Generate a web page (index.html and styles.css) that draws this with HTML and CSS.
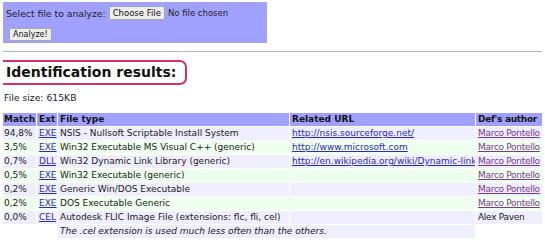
FILE: index.html
```html
<!DOCTYPE html>
<html>
<head>
    <title>File Identifier</title>
    <link rel="stylesheet" href="styles.css">
</head>
<body>
    <form class="upload-box">
        <div class="upload-row">
            <label for="file_input">Select file to analyze:</label>
            <input type="file" id="file_input" name="file_input">
        </div>
        <button type="button" class="analyze-btn">Analyze!</button>
    </form>

    <hr class="divider">

    <h2 class="results-title">Identification results:</h2>
    <p class="file-size">File size: 615KB</p>

    <table class="results">
        <colgroup>
            <col class="col-match">
            <col class="col-ext">
            <col class="col-type">
            <col class="col-url">
            <col class="col-author">
        </colgroup>
        <tr class="head">
            <th>Match</th>
            <th>Ext</th>
            <th>File type</th>
            <th>Related URL</th>
            <th class="author">Def's author</th>
        </tr>
        <tr class="odd">
            <td>94,8%</td>
            <td><a href="#">EXE</a></td>
            <td>NSIS - Nullsoft Scriptable Install System</td>
            <td><a href="#">http://nsis.sourceforge.net/</a></td>
            <td class="author"><a class="visited" href="#">Marco Pontello</a></td>
        </tr>
        <tr class="even">
            <td>3,5%</td>
            <td><a href="#">EXE</a></td>
            <td>Win32 Executable MS Visual C++ (generic)</td>
            <td><a href="#">http://www.microsoft.com</a></td>
            <td class="author"><a class="visited" href="#">Marco Pontello</a></td>
        </tr>
        <tr class="odd">
            <td>0,7%</td>
            <td><a href="#">DLL</a></td>
            <td>Win32 Dynamic Link Library (generic)</td>
            <td class="clip"><a href="#">http://en.wikipedia.org/wiki/Dynamic-link_library</a></td>
            <td class="author"><a class="visited" href="#">Marco Pontello</a></td>
        </tr>
        <tr class="even">
            <td>0,5%</td>
            <td><a href="#">EXE</a></td>
            <td>Win32 Executable (generic)</td>
            <td></td>
            <td class="author"><a class="visited" href="#">Marco Pontello</a></td>
        </tr>
        <tr class="odd">
            <td>0,2%</td>
            <td><a href="#">EXE</a></td>
            <td>Generic Win/DOS Executable</td>
            <td></td>
            <td class="author"><a class="visited" href="#">Marco Pontello</a></td>
        </tr>
        <tr class="even">
            <td>0,2%</td>
            <td><a href="#">EXE</a></td>
            <td>DOS Executable Generic</td>
            <td></td>
            <td class="author"><a class="visited" href="#">Marco Pontello</a></td>
        </tr>
        <tr class="odd">
            <td>0,0%</td>
            <td><a href="#">CEL</a></td>
            <td>Autodesk FLIC Image File (extensions: flc, fli, cel)</td>
            <td></td>
            <td class="author">Alex Paven</td>
        </tr>
        <tr class="note">
            <td class="blank"></td>
            <td class="blank"></td>
            <td colspan="2"><em>The .cel extension is used much less often than the others.</em></td>
            <td class="blank"></td>
        </tr>
    </table>
</body>
</html>
```

FILE: styles.css
```css
html, body {
    overflow: hidden;
}

body {
    margin: 2px 3px;
    font-family: "DejaVu Sans", Verdana, sans-serif;
    font-size: 9.25px;
    color: #222;
    background-color: #fff;
}

.upload-box {
    background-color: #a0a0ff;
    width: 258px;
    height: 34px;
    padding: 3px 3px 4px 3px;
    box-sizing: content-box;
    white-space: nowrap;
}

.upload-row {
    display: flex;
    align-items: center;
    gap: 3px;
    height: 16px;
}

.upload-row label {
    flex: none;
}

input[type="file"] {
    flex: none;
    font-family: "DejaVu Sans", Verdana, sans-serif;
    font-size: 8.5px;
    color: #222;
}

input[type="file"]::file-selector-button,
.analyze-btn {
    font-family: "DejaVu Sans", Verdana, sans-serif;
    font-size: 8.5px;
    color: #111;
    background-color: #ededed;
    border: 1px solid #a8a8a8;
    border-radius: 2px;
    padding: 1px 3px;
    margin-right: 3px;
}

.analyze-btn {
    margin: 7px 0 0 3px;
    font-size: 8px;
    padding: 1px 3px;
}

.divider {
    border: none;
    border-top: 1px solid #b4b4b4;
    margin: 8px -3px 0 -3px;
}

.results-title {
    display: inline-block;
    font-size: 14px;
    font-weight: bold;
    color: #111;
    margin: 8px 0 0 -6px;
    padding: 2px 9px 3px 7px;
    border: 2px solid #d2306e;
    border-radius: 7px;
}

.file-size {
    margin: 7px 0 9px 1px;
}

.results {
    border-spacing: 1px;
    table-layout: fixed;
    width: 596px;
    margin-left: -2px;
    white-space: nowrap;
    font-size: 9px;
}

.col-match { width: 34px; }
.col-ext { width: 20px; }
.col-type { width: 231px; }
.col-url { width: 185px; }
.col-author { width: 120px; }

.results th,
.results td {
    padding: 0 0 0 2px;
    height: 13px;
    line-height: 13px;
    text-align: left;
    overflow: hidden;
}

.results .author {
    letter-spacing: -0.3px;
}

.results .head th {
    background-color: #a0a0ff;
    font-weight: bold;
    color: #111;
}

.results .odd td,
.results .note td {
    background-color: #eeeeff;
}

.results .even td {
    background-color: #eeffee;
}

.results .note td.blank {
    background-color: transparent;
}

.results a {
    color: #2b2bb8;
}

.results a.visited {
    color: #7a3a8c;
}
```
